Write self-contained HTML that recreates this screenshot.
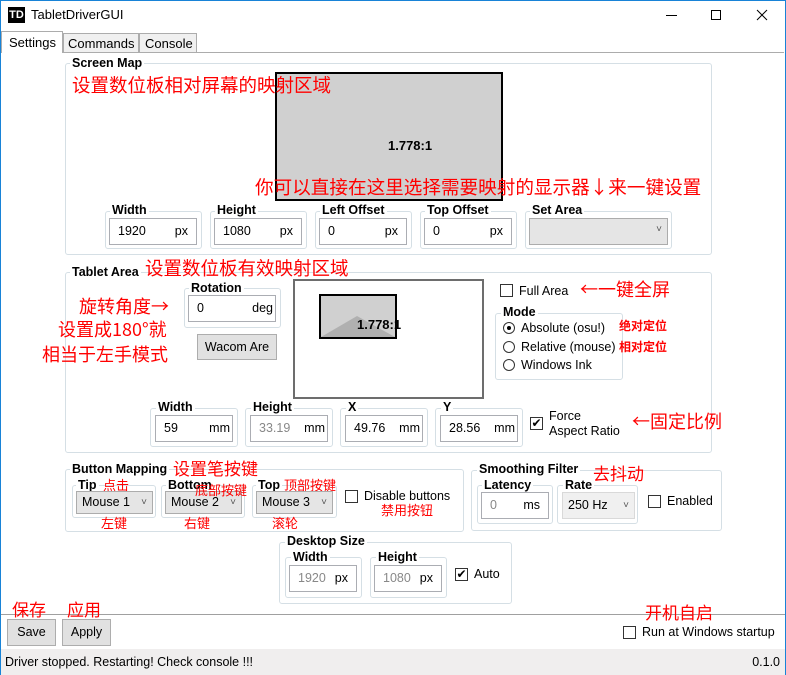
<!DOCTYPE html>
<html><head><meta charset="utf-8"><style>
*{box-sizing:border-box;margin:0;padding:0}
body{width:786px;height:675px;position:relative;background:#fff;font-family:"Liberation Sans","Noto Sans CJK SC",sans-serif;font-size:12.5px;color:#000;overflow:hidden}
.a{position:absolute;white-space:nowrap}
.g{position:absolute;border:1px solid #d5dfe5;border-radius:3px}
.t{position:absolute;background:#fff;font-weight:bold;font-size:12.5px;padding:0 2px;line-height:14px}
.in{position:absolute;border:1px solid #abadb3;background:#fff;height:27px;line-height:25px;padding-left:8px;font-size:12.5px}
.in .u{position:absolute;right:8px;top:0}
.r{color:#f00;position:absolute;white-space:nowrap;font-family:"Noto Sans CJK SC",sans-serif;line-height:1}
.cb{position:absolute;width:13px;height:13px;border:1px solid #333;background:#fff}
.cmb{position:absolute;background:#e5e5e5;border:1px solid #acacac;height:23px;line-height:21px;padding-left:5px}
.cmb:after{content:"˅";position:absolute;right:5px;top:0;font-size:10px;color:#555}
.btn{position:absolute;background:#e1e1e1;border:1px solid #adadad;text-align:center;line-height:24px}
.rad{position:absolute;width:12px;height:12px;border:1px solid #333;border-radius:50%;background:#fff}
</style></head><body>
<div class="a" style="left:0;top:0;width:786px;height:675px;border:1px solid #1883d7;border-bottom:none"></div>
<div class="a" style="left:8px;top:7px;width:17px;height:16px;background:#000;color:#fff;font-size:11px;line-height:16px;text-align:center;font-weight:bold">TD</div>
<div class="a" style="left:31px;top:7px;font-size:13px">TabletDriverGUI</div>
<div class="a" style="left:666px;top:15px;width:11px;height:1px;background:#000"></div>
<div class="a" style="left:711px;top:10px;width:10px;height:10px;border:1px solid #000"></div>
<svg class="a" style="left:756px;top:9px" width="12" height="12"><path d="M1 1L11 11M11 1L1 11" stroke="#000" stroke-width="1"/></svg>
<!-- tabs -->
<div class="a" style="left:2px;top:52px;width:782px;height:1px;background:#acacac"></div>
<div class="a" style="left:1px;top:31px;width:62px;height:22px;background:#fff;border:1px solid #acacac;border-bottom:none;padding:3px 0 0 7px;font-size:13px">Settings</div>
<div class="a" style="left:63px;top:33px;width:76px;height:20px;background:#f0f0f0;border:1px solid #acacac;padding:2px 0 0 4px;font-size:13px">Commands</div>
<div class="a" style="left:139px;top:33px;width:58px;height:20px;background:#f0f0f0;border:1px solid #acacac;padding:2px 0 0 5px;font-size:13px">Console</div>
<!-- Screen Map -->
<div class="g" style="left:65px;top:63px;width:647px;height:192px"></div>
<div class="t" style="left:70px;top:56px">Screen Map</div>
<div class="a" style="left:275px;top:72px;width:228px;height:129px;background:#d0d0d0;border:2px solid #000"></div>
<div class="a" style="left:388px;top:138px;font-weight:bold;font-size:13px">1.778:1</div>
<div class="r" style="left:72px;top:76px;font-size:18.5px">设置数位板相对屏幕的映射区域</div>
<div class="r" style="left:255px;top:178px;font-size:18.6px">你可以直接在这里选择需要映射的显示器↓来一键设置</div>
<div class="g" style="left:105px;top:211px;width:97px;height:38px"></div><div class="t" style="left:110px;top:203px">Width</div>
<div class="in" style="left:109px;top:218px;width:88px">1920<span class="u">px</span></div>
<div class="g" style="left:210px;top:211px;width:97px;height:38px"></div><div class="t" style="left:215px;top:203px">Height</div>
<div class="in" style="left:214px;top:218px;width:88px">1080<span class="u">px</span></div>
<div class="g" style="left:315px;top:211px;width:97px;height:38px"></div><div class="t" style="left:320px;top:203px">Left Offset</div>
<div class="in" style="left:319px;top:218px;width:88px">0<span class="u">px</span></div>
<div class="g" style="left:420px;top:211px;width:97px;height:38px"></div><div class="t" style="left:425px;top:203px">Top Offset</div>
<div class="in" style="left:424px;top:218px;width:88px">0<span class="u">px</span></div>
<div class="g" style="left:525px;top:211px;width:147px;height:38px"></div><div class="t" style="left:530px;top:203px">Set Area</div>
<div class="cmb" style="left:529px;top:218px;width:139px;height:27px"></div>
<!-- Tablet Area -->
<div class="g" style="left:65px;top:272px;width:647px;height:181px"></div>
<div class="t" style="left:70px;top:265px">Tablet Area</div>
<div class="r" style="left:145px;top:259px;font-size:18.5px">设置数位板有效映射区域</div>
<div class="r" style="left:79px;top:297px;font-size:18px">旋转角度→</div>
<div class="r" style="left:58px;top:320px;font-size:18px">设置成180°就</div>
<div class="r" style="left:42px;top:345px;font-size:18px">相当于左手模式</div>
<div class="g" style="left:184px;top:288px;width:97px;height:40px"></div><div class="t" style="left:189px;top:281px">Rotation</div>
<div class="in" style="left:188px;top:295px;width:88px">0<span class="u" style="right:2px">deg</span></div>
<div class="btn" style="left:197px;top:334px;width:80px;height:26px;overflow:hidden">Wacom Are</div>
<div class="a" style="left:293px;top:279px;width:191px;height:120px;border:2px solid #6d6d6d"></div>
<svg class="a" style="left:319px;top:294px" width="78" height="45"><rect x="1" y="1" width="76" height="43" fill="#d0d0d0" stroke="#000" stroke-width="2"/><polygon points="2,43 38,22 76,43" fill="#b0b0b0"/></svg>
<div class="a" style="left:357px;top:317px;font-weight:bold;font-size:13px">1.778:1</div>
<div class="cb" style="left:500px;top:284px"></div><div class="a" style="left:519px;top:284px">Full Area</div>
<div class="r" style="left:580px;top:280px;font-size:18px">←一键全屏</div>
<div class="g" style="left:495px;top:313px;width:128px;height:67px"></div><div class="t" style="left:501px;top:305px">Mode</div>
<div class="rad" style="left:503px;top:322px"><div style="position:absolute;left:3px;top:3px;width:4px;height:4px;border-radius:50%;background:#000"></div></div>
<div class="a" style="left:521px;top:321px">Absolute (osu!)</div>
<div class="rad" style="left:503px;top:341px"></div><div class="a" style="left:521px;top:340px">Relative (mouse)</div>
<div class="rad" style="left:503px;top:359px"></div><div class="a" style="left:521px;top:358px">Windows Ink</div>
<div class="r" style="left:619px;top:320px;font-size:12px;font-weight:bold">绝对定位</div>
<div class="r" style="left:619px;top:341px;font-size:12px;font-weight:bold">相对定位</div>
<div class="g" style="left:150px;top:408px;width:88px;height:39px"></div><div class="t" style="left:156px;top:400px">Width</div>
<div class="in" style="left:155px;top:415px;width:78px">59<span class="u" style="right:2px">mm</span></div>
<div class="g" style="left:245px;top:408px;width:88px;height:39px"></div><div class="t" style="left:251px;top:400px">Height</div>
<div class="in" style="left:250px;top:415px;width:78px;color:#888">33.19<span class="u" style="right:2px;color:#000">mm</span></div>
<div class="g" style="left:340px;top:408px;width:88px;height:39px"></div><div class="t" style="left:346px;top:400px">X</div>
<div class="in" style="left:345px;top:415px;width:78px">49.76<span class="u" style="right:2px">mm</span></div>
<div class="g" style="left:435px;top:408px;width:88px;height:39px"></div><div class="t" style="left:441px;top:400px">Y</div>
<div class="in" style="left:440px;top:415px;width:78px">28.56<span class="u" style="right:2px">mm</span></div>
<div class="cb" style="left:530px;top:417px;font-size:12px;line-height:11px;text-align:center">✔</div>
<div class="a" style="left:549px;top:409px">Force</div><div class="a" style="left:549px;top:424px">Aspect Ratio</div>
<div class="r" style="left:632px;top:412px;font-size:18px">←固定比例</div>
<!-- Button Mapping -->
<div class="g" style="left:65px;top:469px;width:399px;height:63px"></div>
<div class="t" style="left:70px;top:462px">Button Mapping</div>
<div class="r" style="left:173px;top:459px;font-size:17px">设置笔按键</div>
<div class="g" style="left:72px;top:485px;width:84px;height:33px"></div><div class="t" style="left:76px;top:478px">Tip</div>
<div class="r" style="left:103px;top:478px;font-size:13px">点击</div>
<div class="cmb" style="left:76px;top:491px;width:77px">Mouse 1</div>
<div class="g" style="left:161px;top:485px;width:84px;height:33px"></div><div class="t" style="left:166px;top:478px">Bottom</div>
<div class="cmb" style="left:165px;top:491px;width:77px">Mouse 2</div>
<div class="r" style="left:195px;top:483px;font-size:13px">底部按键</div>
<div class="g" style="left:252px;top:485px;width:85px;height:33px"></div><div class="t" style="left:256px;top:478px">Top</div>
<div class="r" style="left:284px;top:478px;font-size:13px">顶部按键</div>
<div class="cmb" style="left:256px;top:491px;width:77px">Mouse 3</div>
<div class="cb" style="left:345px;top:490px"></div><div class="a" style="left:364px;top:489px">Disable buttons</div>
<div class="r" style="left:381px;top:503px;font-size:13px">禁用按钮</div>
<div class="r" style="left:101px;top:516px;font-size:13px">左键</div>
<div class="r" style="left:184px;top:516px;font-size:13px">右键</div>
<div class="r" style="left:272px;top:516px;font-size:13px">滚轮</div>
<!-- Smoothing -->
<div class="g" style="left:471px;top:470px;width:251px;height:61px"></div>
<div class="t" style="left:477px;top:462px">Smoothing Filter</div>
<div class="r" style="left:593px;top:464px;font-size:17px">去抖动</div>
<div class="g" style="left:477px;top:485px;width:76px;height:39px"></div><div class="t" style="left:482px;top:478px">Latency</div>
<div class="in" style="left:481px;top:492px;width:68px;color:#888">0<span class="u" style="color:#000">ms</span></div>
<div class="g" style="left:557px;top:485px;width:81px;height:39px"></div><div class="t" style="left:563px;top:478px">Rate</div>
<div class="cmb" style="left:562px;top:492px;width:73px;height:27px;line-height:25px;background:#f0f0f0;border-color:#d9d9d9">250 Hz</div>
<div class="cb" style="left:648px;top:495px"></div><div class="a" style="left:667px;top:494px">Enabled</div>
<!-- Desktop -->
<div class="g" style="left:279px;top:542px;width:233px;height:62px"></div>
<div class="t" style="left:285px;top:534px">Desktop Size</div>
<div class="g" style="left:285px;top:557px;width:77px;height:41px"></div><div class="t" style="left:291px;top:550px">Width</div>
<div class="in" style="left:289px;top:565px;width:68px;color:#888">1920<span class="u" style="color:#000">px</span></div>
<div class="g" style="left:370px;top:557px;width:77px;height:41px"></div><div class="t" style="left:376px;top:550px">Height</div>
<div class="in" style="left:374px;top:565px;width:68px;color:#888">1080<span class="u" style="color:#000">px</span></div>
<div class="cb" style="left:455px;top:568px;font-size:12px;line-height:11px;text-align:center">✔</div><div class="a" style="left:474px;top:567px">Auto</div>
<!-- bottom -->
<div class="a" style="left:1px;top:614px;width:784px;height:1px;background:#a0a0a0"></div>
<div class="a" style="left:1px;top:615px;width:784px;height:34px;background:#fff"></div>
<div class="r" style="left:12px;top:600px;font-size:17px">保存</div>
<div class="r" style="left:67px;top:600px;font-size:17px">应用</div>
<div class="r" style="left:645px;top:603px;font-size:17px">开机自启</div>
<div class="btn" style="left:7px;top:619px;width:49px;height:27px">Save</div>
<div class="btn" style="left:62px;top:619px;width:49px;height:27px">Apply</div>
<div class="cb" style="left:623px;top:626px"></div><div class="a" style="left:642px;top:625px">Run at Windows startup</div>
<div class="a" style="left:1px;top:649px;width:784px;height:26px;background:#f0eeee"></div>
<div class="a" style="left:5px;top:655px">Driver stopped. Restarting! Check console !!!</div>
<div class="a" style="right:6px;top:655px">0.1.0</div>
</body></html>
